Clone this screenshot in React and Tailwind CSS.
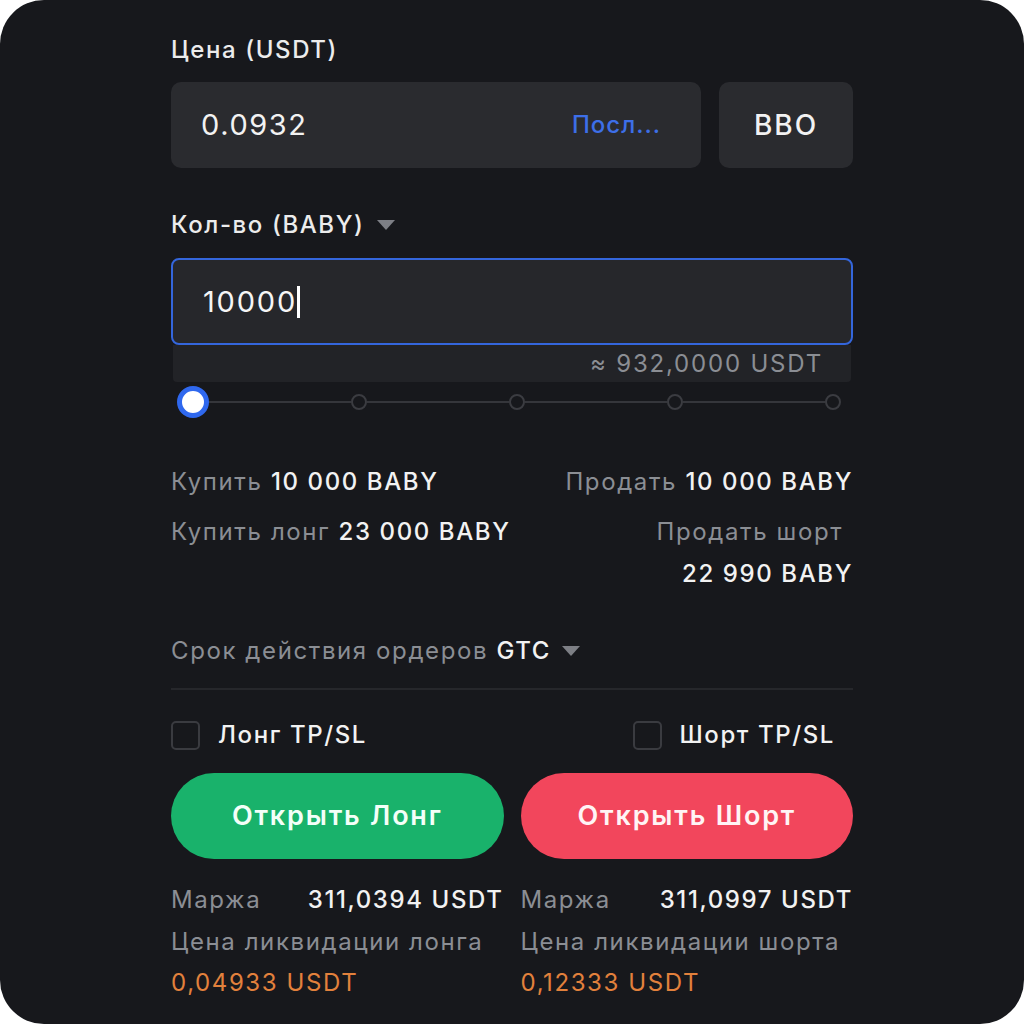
import React from 'react';

const Caret = ({ className }) => (
  <svg width="20" height="12" viewBox="0 0 20 12" className={className}>
    <path d="M1 1 L19 1 L10 11 Z" fill="#7d7f85" />
  </svg>
);

const Checkbox = () => (
  <span className="w-[29px] h-[29px] rounded-[5px] border-2 border-[#3a3b40] inline-block shrink-0" />
);

const Dot = () => (
  <span className="w-[16px] h-[16px] rounded-full border-2 border-[#3b3c41] bg-[#17181c] shrink-0" />
);

const App = () => {
  return (
    <div className="w-[1024px] h-[1024px] bg-white" style={{ fontFamily: 'Inter, "Noto Sans", sans-serif' }}>
      <div className="w-full h-full bg-[#17181c] rounded-[44px] overflow-hidden">
        <div className="w-[682px] mx-auto pt-[36px] flex flex-col tracking-[1.6px]">

          {/* Цена */}
          <div className="text-[24px] leading-[28px] text-[#ececec] font-medium">Цена (USDT)</div>
          <div className="mt-[18px] flex gap-[18px]">
            <div className="flex-1 h-[86px] bg-[#2a2b2f] rounded-[10px] flex items-center justify-between pl-[30px] pr-[40px]">
              <span className="text-[29px] text-[#f2f2f2] tracking-[1.6px]">0.0932</span>
              <span className="text-[24px] text-[#3d6fe8] font-medium tracking-[1px]">Посл...</span>
            </div>
            <div className="w-[134px] h-[86px] bg-[#2a2b2f] rounded-[10px] flex items-center justify-center">
              <span className="text-[28px] text-[#f2f2f2] font-medium tracking-[2px]">BBO</span>
            </div>
          </div>

          {/* Кол-во */}
          <div className="mt-[43px] flex items-center gap-[12px]">
            <span className="text-[24px] leading-[28px] text-[#ececec] font-medium">Кол-во (BABY)</span>
            <Caret />
          </div>
          <div className="mt-[19px] h-[87px] border-2 border-[#3466dc] bg-[#26272b] rounded-[8px] flex items-center pl-[30px]">
            <span className="text-[29px] text-[#f5f5f5] tracking-[1.8px]">10000</span>
            <span className="w-[3px] h-[32px] bg-white" />
          </div>
          <div className="mx-[2px] h-[37px] bg-[#222327] rounded-b-[4px] flex items-center justify-end pr-[28px]">
            <span className="text-[24px] text-[#8b8e94] tracking-[1.8px]">≈ 932,0000 USDT</span>
          </div>

          {/* Slider */}
          <div className="mt-[2px] h-[36px] flex items-center pl-[6px] pr-[12px]">
            <span className="w-[32px] h-[32px] rounded-full border-[5px] border-[#2f68ee] bg-white shrink-0" />
            <span className="flex-1 h-[2px] bg-[#35363b]" />
            <Dot />
            <span className="flex-1 h-[2px] bg-[#35363b]" />
            <Dot />
            <span className="flex-1 h-[2px] bg-[#35363b]" />
            <Dot />
            <span className="flex-1 h-[2px] bg-[#35363b]" />
            <Dot />
          </div>

          {/* Купить / Продать */}
          <div className="mt-[47px] flex justify-between text-[24px] leading-[30px]">
            <span><span className="text-[#8b8e94]">Купить</span> <span className="text-[#f2f2f2] font-medium">10 000 BABY</span></span>
            <span><span className="text-[#8b8e94]">Продать</span> <span className="text-[#f2f2f2] font-medium">10 000 BABY</span></span>
          </div>
          <div className="mt-[20px] flex justify-between text-[24px] leading-[30px]">
            <span><span className="text-[#8b8e94]">Купить лонг</span> <span className="text-[#f2f2f2] font-medium">23 000 BABY</span></span>
            <div className="flex flex-col items-end">
              <span className="text-[#8b8e94] pr-[10px]">Продать шорт</span>
              <span className="text-[#f2f2f2] font-medium mt-[12px]">22 990 BABY</span>
            </div>
          </div>

          {/* Срок действия */}
          <div className="mt-[47px] flex items-center gap-[10px] text-[24px] leading-[30px]">
            <span><span className="text-[#8b8e94]">Срок действия ордеров</span> <span className="text-[#f2f2f2] font-medium">GTC</span></span>
            <Caret />
          </div>
          <div className="mt-[22px] h-[2px] bg-[#26272b]" />

          {/* TP/SL */}
          <div className="mt-[27px] flex justify-between items-center">
            <label className="flex items-center gap-[18px]">
              <Checkbox />
              <span className="text-[24px] text-[#f2f2f2] font-medium">Лонг TP/SL</span>
            </label>
            <label className="flex items-center gap-[18px] pr-[18px]">
              <Checkbox />
              <span className="text-[24px] text-[#f2f2f2] font-medium">Шорт TP/SL</span>
            </label>
          </div>

          {/* Кнопки */}
          <div className="mt-[20px] flex gap-[17px]">
            <button className="flex-1 h-[86px] rounded-full bg-[#19b26b] text-[27px] font-semibold text-[#f4fff8] tracking-[1.8px]">Открыть Лонг</button>
            <button className="flex-1 h-[86px] rounded-full bg-[#f2465c] text-[27px] font-semibold text-[#fff4f5] tracking-[1.8px]">Открыть Шорт</button>
          </div>

          {/* Маржа */}
          <div className="mt-[26px] flex gap-[17px] text-[24px] leading-[30px]">
            <div className="flex-1 flex flex-col">
              <div className="flex justify-between">
                <span className="text-[#8b8e94]">Маржа</span>
                <span className="text-[#f2f2f2] font-medium">311,0394 USDT</span>
              </div>
              <span className="mt-[12px] text-[#8b8e94] whitespace-nowrap">Цена ликвидации лонга</span>
              <span className="mt-[11px] text-[#e2813c]">0,04933 USDT</span>
            </div>
            <div className="flex-1 flex flex-col">
              <div className="flex justify-between">
                <span className="text-[#8b8e94]">Маржа</span>
                <span className="text-[#f2f2f2] font-medium">311,0997 USDT</span>
              </div>
              <span className="mt-[12px] text-[#8b8e94] whitespace-nowrap">Цена ликвидации шорта</span>
              <span className="mt-[11px] text-[#e2813c]">0,12333 USDT</span>
            </div>
          </div>
        </div>
      </div>
    </div>
  );
};

export default App;
